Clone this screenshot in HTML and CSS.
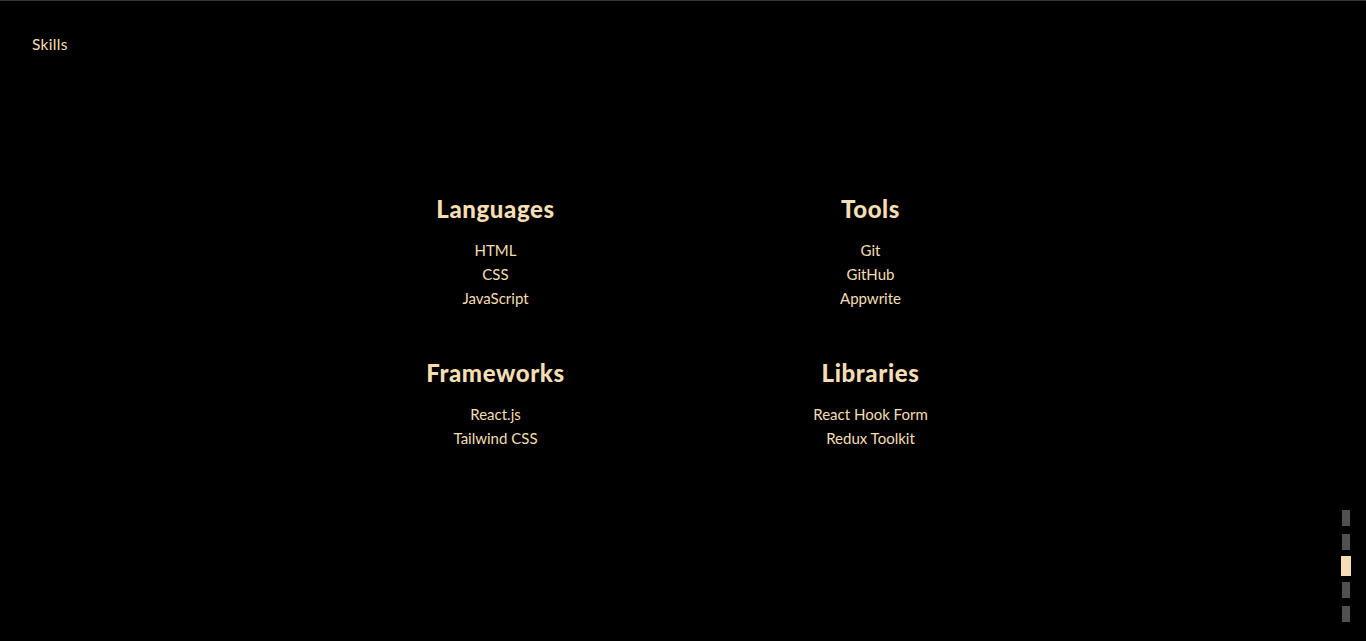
FILE: index.html
```html
<!DOCTYPE html>
<html lang="en">
<head>
<meta charset="utf-8">
<title>Skills</title>
<link rel="stylesheet" href="styles.css">
</head>
<body>
<div class="page">
  <header class="header">Skills</header>
  <main class="main">
    <div class="grid">
      <section class="group">
        <h2 class="title">Languages</h2>
        <ul class="list">
          <li>HTML</li>
          <li>CSS</li>
          <li>JavaScript</li>
        </ul>
      </section>
      <section class="group">
        <h2 class="title">Tools</h2>
        <ul class="list">
          <li>Git</li>
          <li>GitHub</li>
          <li>Appwrite</li>
        </ul>
      </section>
      <section class="group">
        <h2 class="title">Frameworks</h2>
        <ul class="list">
          <li>React.js</li>
          <li>Tailwind CSS</li>
        </ul>
      </section>
      <section class="group">
        <h2 class="title">Libraries</h2>
        <ul class="list">
          <li>React Hook Form</li>
          <li>Redux Toolkit</li>
        </ul>
      </section>
    </div>
  </main>
  <nav class="dots">
    <span class="dot"></span>
    <span class="dot"></span>
    <span class="dot active"></span>
    <span class="dot"></span>
    <span class="dot"></span>
  </nav>
</div>
</body>
</html>
```
FILE: styles.css
```css
html, body {
  margin: 0;
  padding: 0;
  height: 100%;
  background: #000;
}
body {
  font-family: Lato, "Noto Sans", sans-serif;
  color: #f5deb3;
}
.page {
  position: relative;
  height: 640px;
  border-top: 1px solid #363636;
  display: flex;
  flex-direction: column;
}
.header {
  position: absolute;
  top: 32px;
  left: 32px;
  font-size: 15.5px;
  line-height: 22px;
  letter-spacing: 0.3px;
}
.main {
  flex: 1;
  display: flex;
  align-items: center;
  justify-content: center;
}
.grid {
  display: grid;
  grid-template-columns: 375px 375px;
  row-gap: 47px;
}
.group {
  display: flex;
  flex-direction: column;
  align-items: center;
}
.title {
  margin: 0 0 13px;
  font-size: 24px;
  line-height: 32px;
  font-weight: 900;
  letter-spacing: 0.6px;
}
.list {
  list-style: none;
  margin: 0;
  padding: 0;
  text-align: center;
  font-size: 15px;
  line-height: 24px;
}
.dots {
  position: absolute;
  right: 15px;
  bottom: 19px;
  width: 10px;
  display: flex;
  flex-direction: column;
  align-items: center;
  gap: 8px;
}
.dot {
  display: block;
  width: 8px;
  height: 16px;
  background: #505050;
}
.dot.active {
  width: 10px;
  height: 20px;
  background: #f5deb3;
  margin: -2px 0;
}
```
